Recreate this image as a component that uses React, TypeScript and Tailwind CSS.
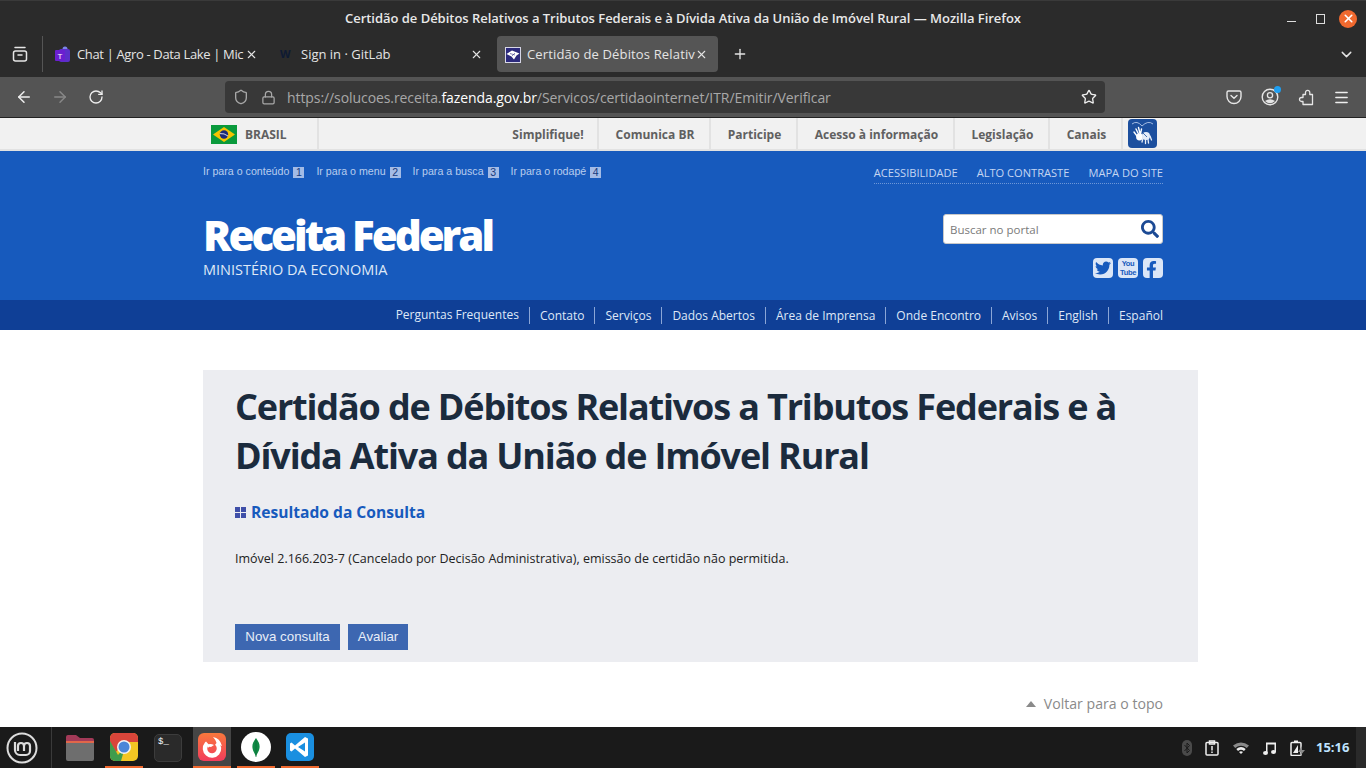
import { ArrowLeft, ArrowRight, ChevronDown, Lock, Menu, Plus, RotateCw, Shield, Star, X } from "lucide-react";
import { FaFacebookF, FaSearch, FaTwitter } from "react-icons/fa";

const govLinks = [
	["Simplifique!", "w-[102px]"],
	["Comunica BR", "w-[112px]"],
	["Participe", "w-[87px]"],
	["Acesso à informação", "w-[157px]"],
	["Legislação", "w-[95px]"],
	["Canais", "w-[73px]"],
];
const skipLinks = [
	["Ir para o conteúdo", "1"],
	["Ir para o menu", "2"],
	["Ir para a busca", "3"],
	["Ir para o rodapé", "4"],
];
const navLinks = ["Perguntas Frequentes", "Contato", "Serviços", "Dados Abertos", "Área de Imprensa", "Onde Encontro", "Avisos", "English", "Español"];

const Flag = () => (
	<svg width="26" height="19" viewBox="0 0 26 19">
		<rect width="26" height="19" fill="#0a9a3c" />
		<path d="M13 2 L24 9.5 L13 17 L2 9.5 Z" fill="#f5c400" />
		<circle cx="13" cy="9.5" r="4.2" fill="#1c2a78" />
		<path d="M9 8.6 Q13 8 17 11" stroke="#fff" strokeWidth="0.8" fill="none" />
	</svg>
);

const HandsIcon = () => (
	<svg width="29" height="29" viewBox="0 0 29 29">
		<rect width="29" height="29" rx="4" fill="#1c4f9e" />
		<path d="M4 5 Q9 1 14 7 Q20 1 25 5" stroke="#c5d6f2" strokeWidth="0.8" fill="none" />
		<path d="M8 10 l2.500 5 M10.500 8.500 l1.500 6 M6 13 l3 4 M13.500 10 l-1 5" stroke="#fff" strokeWidth="1.400" strokeLinecap="round" />
		<circle cx="11.500" cy="18" r="3.400" fill="#fff" />
		<circle cx="18" cy="17" r="4" fill="#e6edf8" />
		<path d="M15 19 l-1 4 M17.500 20 v4.500 M20 20 l.5 4 M22 17 l1.500 4" stroke="#e6edf8" strokeWidth="1.300" strokeLinecap="round" />
		<path d="M15 14 L19 18" stroke="#1c4f9e" strokeWidth="0.8" />
	</svg>
);

const TeamsIcon = () => (
	<svg width="16" height="18" viewBox="0 0 16 18">
		<circle cx="10" cy="3" r="2.500" fill="#7b83eb" />
		<rect x="4" y="3" width="11" height="13" rx="2" fill="#5b2fc9" />
		<rect x="0" y="4" width="10" height="11" rx="1" fill="#6a1fd0" />
		<text x="5" y="12.500" fontSize="8" fill="#fff" textAnchor="middle" fontFamily="Liberation Sans, sans-serif">T</text>
	</svg>
);

const ReceitaFavicon = () => (
	<svg width="16" height="16" viewBox="0 0 16 16">
		<rect width="16" height="16" fill="#2c2a7c" />
		<rect x="0.500" y="0.500" width="15" height="15" fill="none" stroke="#d8d8e8" />
		<path d="M1.500 7 L7 3.500 L14.500 6.500 L11.500 8.500 L9 12.500 L6.500 9.500 Z" fill="#fff" />
		<path d="M5 6.500 L10 8 M7 9 L10 6" stroke="#2c2a7c" strokeWidth="0.6" />
	</svg>
);

const FirefoxView = () => (
	<svg width="18" height="18" viewBox="0 0 18 18" fill="none" stroke="#e6e6e6" strokeWidth="1.500">
		<rect x="2.500" y="6" width="13" height="10" rx="2" />
		<path d="M4 2.500 h10 M7 10 h4" strokeLinecap="round" />
	</svg>
);

const Pocket = () => (
	<svg width="16" height="16" viewBox="0 0 16 16" fill="none" stroke="#e6e6e6" strokeWidth="1.400">
		<path d="M2.500 2 h11 a1.500 1.500 0 0 1 1.500 1.500 v4 a7 7 0 0 1 -14 0 v-4 a1.500 1.500 0 0 1 1.500 -1.500 Z" />
		<path d="M5 6.500 L8 9.300 L11 6.500" strokeLinecap="round" />
	</svg>
);

const Account = () => (
	<svg width="18" height="18" viewBox="0 0 18 18">
		<circle cx="9" cy="9" r="7.800" fill="none" stroke="#e6e6e6" strokeWidth="1.400" />
		<circle cx="9" cy="7.300" r="2.600" fill="none" stroke="#e6e6e6" strokeWidth="1.300" />
		<path d="M4 13 Q9 9.500 14 13 Q9 17.500 4 13 Z" fill="#e6e6e6" />
	</svg>
);

const Extensions = () => (
	<svg width="16" height="17" viewBox="0 0 16 17" fill="none" stroke="#e6e6e6" strokeWidth="1.300" strokeLinejoin="round">
		<path d="M5 5.500 H7.500 V4 A2.200 2.200 0 1 1 11.800 4 V5.500 H14.500 V15.500 H5 V12.500 H3.500 A2 2 0 0 1 3.500 8.500 H5 Z" />
	</svg>
);

const GridBullet = () => (
	<span className="grid grid-cols-2 gap-px w-[11px] h-[11px] mr-[5px]">
		<span className="bg-[#3f4fa8]" />
		<span className="bg-[#3f4fa8]" />
		<span className="bg-[#3f4fa8]" />
		<span className="bg-[#3f4fa8]" />
	</span>
);

const MintLogo = () => (
	<svg width="32" height="32" viewBox="0 0 32 32" fill="none" stroke="#dcdcdc">
		<circle cx="16" cy="16" r="14.500" strokeWidth="2" />
		<path d="M9 10 v8 a5 5 0 0 0 5 5 h6 a4 4 0 0 0 4 -4 v-5 a3 3 0 0 0 -6 0 v5 M18 14 a3 3 0 0 0 -6 0 v5" strokeWidth="2.200" />
	</svg>
);

const Folder = () => (
	<svg width="28" height="26" viewBox="0 0 28 26">
		<path d="M0 2 a2 2 0 0 1 2 -2 h8 l4 3 h12 a2 2 0 0 1 2 2 v4 H0 Z" fill="#a33a58" />
		<rect y="6" width="28" height="2" fill="#e0674a" />
		<path d="M0 8 h28 v16 a2 2 0 0 1 -2 2 H2 a2 2 0 0 1 -2 -2 Z" fill="#6e6e6e" />
	</svg>
);

const Chrome = () => (
	<svg width="28" height="28" viewBox="0 0 28 28">
		<rect width="28" height="28" rx="5" fill="#f3c623" />
		<path d="M5 0 h18 a5 5 0 0 1 5 5 v4 H14 L6 19 L0 9 V5 a5 5 0 0 1 5 -5 Z" fill="#d9453a" />
		<path d="M0 8 L8 22 L15 14 L11 28 H5 a5 5 0 0 1 -5 -5 Z" fill="#3f9c4c" />
		<circle cx="14" cy="14" r="7" fill="#f3f3f3" />
		<circle cx="14" cy="14" r="5.500" fill="#4a86d8" />
	</svg>
);

const FirefoxApp = () => (
	<svg width="28" height="28" viewBox="0 0 28 28">
		<defs>
			<linearGradient id="ffbg" x1="0" y1="0" x2="0" y2="1">
				<stop offset="0" stopColor="#f9783c" />
				<stop offset="1" stopColor="#f23c5c" />
			</linearGradient>
		</defs>
		<rect width="28" height="28" rx="6" fill="url(#ffbg)" />
		<circle cx="14" cy="15.500" r="7" fill="none" stroke="#fff" strokeWidth="4.500" strokeDasharray="34 10" transform="rotate(-50 14 15.500)" />
		<path d="M15 4 Q22 5 24 13 L19 11 Q18 7 15 4 Z" fill="#fff" />
		<path d="M9 12 Q12 10 16 12 L13 14 Q11 13 10 15 Z" fill="#fff" />
	</svg>
);

const Mongo = () => (
	<svg width="30" height="30" viewBox="0 0 30 30">
		<circle cx="15" cy="15" r="15" fill="#fff" />
		<path d="M15 6 C12 10 11 13 11.500 16 C12 20 14 21 15 25 C16 21 18 20 18.500 16 C19 13 18 10 15 6 Z" fill="#0f8a45" />
		<path d="M15 8 V25" stroke="#0a5c2e" strokeWidth="0.500" />
	</svg>
);

const VSCode = () => (
	<svg width="28" height="28" viewBox="0 0 28 28">
		<rect width="28" height="28" rx="5" fill="#1a8fe0" />
		<path d="M19 4 L22 5.500 V22.500 L19 24 L9 15.500 L5.500 18.500 L4 17.500 V10.500 L5.500 9.500 L9 12.500 Z M19 9.500 L12 14 L19 18.500 Z" fill="#fff" />
	</svg>
);

const Terminal = () => (
	<div className="w-[28px] h-[28px] rounded-[5px] bg-[#2a2a2a] border border-[#3c3c3c] text-white text-[9px] leading-[10px] pl-[3px] pt-[2px] font-['Liberation_Mono',monospace]">
		$_
	</div>
);

const Tray = () => (
	<div className="flex items-center text-[#e8e8e8]">
		<svg className="mr-[13px]" width="10" height="16" viewBox="0 0 10 16">
			<rect width="10" height="16" rx="5" fill="#4a4a4a" />
			<path d="M2.500 5 L7.500 10.500 L5 13 V3 L7.500 5.500 L2.500 11" stroke="#1a1a1a" fill="none" />
		</svg>
		<svg className="mr-[14px]" width="14" height="16" viewBox="0 0 14 16" fill="none" stroke="#eee" strokeWidth="1.500">
			<rect x="1" y="2.500" width="12" height="12.500" rx="1" />
			<path d="M4.500 1 h5 v3 h-5 Z M7 6 v4.500 M7 11.500 v1.500" />
		</svg>
		<svg className="mr-[14px]" width="16" height="12" viewBox="0 0 16 12">
			<path d="M0 3.500 Q8 -2.500 16 3.500 L13.800 6 Q8 1.500 2.200 6 Z" fill="#8a8a8a" />
			<path d="M3.300 7 Q8 3 12.700 7 L11 9 Q8 6.600 5 9 Z" fill="#eee" />
			<path d="M6 10 Q8 8.500 10 10 L8 12 Z" fill="#eee" />
		</svg>
		<svg className="mr-[14px]" width="13" height="14" viewBox="0 0 13 14" fill="#eee">
			<path d="M3 1.500 H13 V11 H11.500 V3.500 H4.500 V12 H3 Z" />
			<ellipse cx="2.500" cy="12" rx="2.500" ry="2" />
			<ellipse cx="10.500" cy="11" rx="2.500" ry="2" />
		</svg>
		<svg className="mr-[11px]" width="15" height="16" viewBox="0 0 15 16" fill="none">
			<rect x="1" y="2.500" width="10" height="13" rx="1" stroke="#eee" strokeWidth="1.500" />
			<rect x="4" y="0.500" width="4" height="2" fill="#eee" />
			<path d="M3 13 L8 5 V13 Z" fill="#eee" />
			<path d="M12 6 L8 12 H11 L10 16 L15 10 H12 Z" fill="#8a8a8a" />
		</svg>
		<span className="w-[40px] text-[13px] font-bold text-[#bfe3ff]">15:16</span>
	</div>
);

const App = () => {
	return (
		<div className="w-[1366px] h-[768px] overflow-hidden flex flex-col bg-white font-['Open_Sans',sans-serif]">
			{/* title bar */}
			<div className="h-[36px] shrink-0 bg-[#2b2b2b] border-t border-[#3a3a3a] flex items-center text-[13px] font-semibold text-[#e8e8e8]">
				<div className="flex-1 pl-[345px] whitespace-nowrap tracking-[-0.03px]">Certidão de Débitos Relativos a Tributos Federais e à Dívida Ativa da União de Imóvel Rural — Mozilla Firefox</div>
				<div className="flex items-center pr-[9px]">
					<span className="w-[9px] h-px mt-[6px] mr-[20px] bg-[#ddd]" />
					<span className="w-[9px] h-[10px] border border-[#ddd] mr-[14px]" />
					<span className="w-[18px] h-[18px] rounded-full bg-[#f0692f] flex items-center justify-center">
						<X size={13} strokeWidth={3} color="#fff" />
					</span>
				</div>
			</div>
			{/* tab strip */}
			<div className="h-[41px] shrink-0 bg-[#2b2b2b] flex items-start text-[13px] text-[#e4e4e4]">
				<div className="w-[43px] h-[36px] flex items-center justify-center border-r border-[#555] shrink-0 pr-[3px]">
					<FirefoxView />
				</div>
				<div className="w-[225px] h-[36px] flex items-center pl-[12px] pr-[10px] pt-px shrink-0">
					<TeamsIcon />
					<span className="ml-[6px] whitespace-nowrap tracking-[-0.35px]">Chat | Agro - Data Lake | Mic</span>
					<X size={13} className="ml-auto" />
				</div>
				<div className="w-[229px] h-[36px] flex items-center pl-[12px] pr-[14px] pt-px shrink-0">
					<span className="w-[15px] text-[11px] font-bold text-[#0e1a33]">W</span>
					<span className="ml-[6px]">Sign in · GitLab</span>
					<X size={13} className="ml-auto" />
				</div>
				<div className="w-[221px] h-[36px] rounded-[4px] bg-[#555555] flex items-center pl-[8px] pr-[10px] pt-px shrink-0">
					<ReceitaFavicon />
					<span className="ml-[6px] whitespace-nowrap tracking-[0.15px]">Certidão de Débitos Relativ</span>
					<X size={13} className="ml-auto" />
				</div>
				<div className="h-[36px] flex items-center ml-[14px]">
					<Plus size={16} />
				</div>
				<div className="h-[36px] flex items-center ml-auto pr-[11px]">
					<ChevronDown size={17} />
				</div>
			</div>
			{/* nav bar */}
			<div className="h-[41px] shrink-0 bg-[#545454] border-b border-[#222] flex items-center text-[#eee]">
				<ArrowLeft size={18} className="ml-[15px]" />
				<ArrowRight size={18} className="ml-[18px] text-[#888]" />
				<RotateCw size={16} className="ml-[19px]" />
				<div className="ml-[121px] w-[880px] h-[32px] rounded-[4px] bg-[#383838] flex items-center pl-[8px] pr-[8px] text-[14px] text-[#a8a8a8]">
					<Shield size={16} />
					<Lock size={15} className="ml-[12px]" />
					<span className="ml-[11px] whitespace-nowrap tracking-[-0.08px]">
						https://solucoes.receita.<span className="text-white">fazenda.gov.br</span>/Servicos/certidaointernet/ITR/Emitir/Verificar
					</span>
					<Star size={16} className="ml-auto text-[#eee]" />
				</div>
				<div className="ml-[121px]">
					<Pocket />
				</div>
				<div className="ml-[19px] relative">
					<Account />
					<span className="absolute -top-[2px] -right-[2px] w-[7px] h-[7px] rounded-full bg-[#1e9ff2]" />
				</div>
				<div className="ml-[19px]">
					<Extensions />
				</div>
				<Menu size={17} className="ml-[19px]" />
			</div>
			{/* page */}
			<div className="flex-1 min-h-0 overflow-hidden">
				<div className="h-[33px] bg-[#f1f1f1] border-b-2 border-[#e2e2e2] pl-[203px] flex items-stretch text-[12px] font-bold text-[#606060]">
					<div className="w-[116px] border-r-2 border-[#e2e2e2] flex items-center pl-[8px] pt-[2px]">
						<Flag />
						<span className="ml-[8px]">BRASIL</span>
					</div>
					<div className="ml-auto flex items-stretch pr-[209px]">
						{govLinks.map(([label, width]) => (
							<div key={label} className={`flex items-center justify-center pt-[2px] pl-[2px] border-r-2 border-[#e2e2e2] whitespace-nowrap ${width}`}>
								{label}
							</div>
						))}
						<div className="flex items-center pl-[5px]">
							<HandsIcon />
						</div>
					</div>
				</div>
				<div className="h-[149px] bg-[#175abd] pl-[203px] pr-[203px] text-white">
					<div className="flex justify-between pt-[14px]">
						<div className="flex gap-[12px] font-['Liberation_Sans',sans-serif] text-[10.65px] text-[#b9cdee] h-[14px]">
							{skipLinks.map(([label, n]) => (
								<div key={n} className="flex items-center gap-[4px]">
									{label}
									<span className="w-[11px] h-[11px] bg-[#a3bbe6] text-[#15397c] text-[10.5px] leading-[11px] text-center">{n}</span>
								</div>
							))}
						</div>
						<div className="flex gap-[19px] text-[11.1px] text-[#c5d6f2] border-b border-dotted border-[#6d97d8] h-[19px] leading-[16px]">
							<span>ACESSIBILIDADE</span>
							<span>ALTO CONTRASTE</span>
							<span>MAPA DO SITE</span>
						</div>
					</div>
					<div className="flex justify-between mt-[30px]">
						<div>
							<div className="text-[42px] font-extrabold leading-[42px] tracking-[-3px]">Receita Federal</div>
							<div className="text-[14.5px] leading-[20px] mt-[4px] text-[#dfe8f7]">MINISTÉRIO DA ECONOMIA</div>
						</div>
						<div className="flex flex-col items-end">
							<div className="w-[220px] h-[30px] bg-white rounded-[3px] border border-[#c8c8c8] flex items-center pl-[6px] pr-[3px] text-[11.5px] text-[#7a7a7a]">
								<span className="pt-[2px]">Buscar no portal</span>
								<FaSearch size={18} className="ml-auto text-[#1c4a94]" />
							</div>
							<div className="flex items-center gap-[5px] mt-[14px] text-[#175abd]">
								<div className="w-[20px] h-[20px] rounded-[4px] bg-[#dbe6f7] flex items-center justify-center">
									<FaTwitter size={16} />
								</div>
								<div className="w-[20px] h-[20px] rounded-[4px] bg-[#dbe6f7] flex flex-col items-center justify-center font-['Liberation_Sans',sans-serif] font-bold text-[7.5px] leading-[9px] tracking-[-0.3px]">
									<span>You</span>
									<span>Tube</span>
								</div>
								<div className="w-[20px] h-[20px] rounded-[4px] bg-[#dbe6f7] flex items-end justify-end pr-[3px] overflow-hidden">
									<FaFacebookF size={17} />
								</div>
							</div>
						</div>
					</div>
				</div>
				<div className="h-[30px] bg-[#0f3f96] pr-[203px] flex items-center justify-end text-[12px] text-[#dfe8f7]">
					{navLinks.map((label, i) => (
						<span key={label} className={i === 0 ? "pr-[10px]" : "px-[10px] border-l border-[#8aa5d6] last:pr-0 leading-[17px]"}>
							{label}
						</span>
					))}
				</div>
				<div className="ml-[203px] mt-[40px] w-[995px] h-[292px] bg-[#ecedf1] pl-[32px] pt-[12px]">
					<h1 className="text-[36px] font-bold leading-[49px] tracking-[-1.16px] text-[#1b2b3d] w-[930px]">Certidão de Débitos Relativos a Tributos Federais e à Dívida Ativa da União de Imóvel Rural</h1>
					<h2 className="flex items-center mt-[21px] text-[15.6px] font-bold leading-[22px] text-[#175abd]">
						<GridBullet />
						Resultado da Consulta
					</h2>
					<p className="mt-[27px] text-[12.5px] leading-[18px] text-[#222]">Imóvel 2.166.203-7 (Cancelado por Decisão Administrativa), emissão de certidão não permitida.</p>
					<div className="flex gap-[8px] mt-[56px] font-['Liberation_Sans',sans-serif] text-[13.3px] text-[#e8eef8]">
						<button className="w-[105px] h-[26px] bg-[#3d67b1]">Nova consulta</button>
						<button className="w-[60px] h-[26px] bg-[#3d67b1]">Avaliar</button>
					</div>
				</div>
				<div className="mt-[32px] pr-[203px] flex items-center justify-end text-[14.1px] leading-[20px] text-[#8a8a8a]">
					<span className="w-0 h-0 border-x-[5px] border-x-transparent border-b-[6px] border-b-[#8a8a8a] mr-[8px]" />
					Voltar para o topo
				</div>
			</div>
			{/* dock */}
			<div className="h-[41px] shrink-0 bg-[#1a1a1a] flex items-stretch">
				<div className="w-[52px] flex items-center pl-[6px] border-r border-[#3a3a3a]">
					<MintLogo />
				</div>
				<div className="w-[53px] flex items-center justify-end pr-[11px]">
					<Folder />
				</div>
				<div className="w-[38px] flex items-center justify-center border-b-2 border-[#f0692f]">
					<Chrome />
				</div>
				<div className="w-[50px] flex items-center justify-center">
					<Terminal />
				</div>
				<div className="w-[38px] flex items-center justify-center bg-[#454545] border-b-2 border-[#f0692f]">
					<FirefoxApp />
				</div>
				<div className="ml-[6px] w-[38px] flex items-center justify-center border-b-2 border-[#f0692f]">
					<Mongo />
				</div>
				<div className="ml-[6px] w-[38px] flex items-center justify-center border-b-2 border-[#f0692f]">
					<VSCode />
				</div>
				<div className="ml-auto flex items-center justify-end">
					<Tray />
				</div>
				<div className="w-[10px] bg-[#2a2a2a]" />
			</div>
		</div>
	);
};

export default App;
